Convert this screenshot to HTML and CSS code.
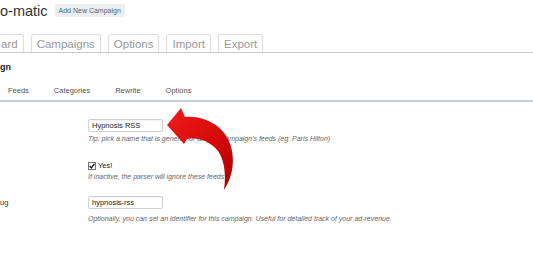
FILE: index.html
```html
<!DOCTYPE html>
<html lang="en">
<head>
    <meta charset="UTF-8">
    <title>WP-o-matic - Add New Campaign</title>
    <link rel="stylesheet" href="styles.css">
</head>
<body>

    <!-- Page title -->
    <div class="page-title">
        <h1>o-matic</h1>
        <a class="add-new" href="#">Add New Campaign</a>
    </div>

    <!-- Main tabs -->
    <nav class="main-tabs">
        <a class="tab cut" href="#">ard</a>
        <a class="tab" href="#">Campaigns</a>
        <a class="tab" href="#">Options</a>
        <a class="tab" href="#">Import</a>
        <a class="tab" href="#">Export</a>
    </nav>

    <h2 class="section-title">gn</h2>

    <!-- Campaign sub tabs -->
    <nav class="sub-tabs">
        <a href="#">Feeds</a>
        <a href="#">Categories</a>
        <a href="#">Rewrite</a>
        <a href="#">Options</a>
    </nav>

    <!-- Form -->
    <div class="form-rows">
        <div class="row">
            <label></label>
            <div class="field">
                <input class="text-input" type="text" value="Hypnosis RSS">
                <p class="note">Tip: pick a name that is general for all your campaign's feeds (eg: Paris Hilton)</p>
            </div>
        </div>

        <div class="row active-row">
            <label></label>
            <div class="field">
                <div class="check-line">
                    <span class="check">
                        <svg width="8" height="8" viewBox="0 0 9 9"><path d="M1.8 4.6 L3.7 6.6 L7.3 2" fill="none" stroke="#222" stroke-width="1.6"/></svg>
                    </span>
                    <span>Yes!</span>
                </div>
                <p class="note">If inactive, the parser will ignore these feeds</p>
            </div>
        </div>

        <div class="row slug-row">
            <label>ug</label>
            <div class="field">
                <input class="text-input" type="text" value="hypnosis-rss">
                <p class="note">Optionally, you can set an identifier for this campaign. Useful for detailed track of your ad-revenue.</p>
            </div>
        </div>
    </div>

    <!-- Red arrow pointing at the name field -->
    <svg class="arrow" width="533" height="261" viewBox="0 0 533 261">
        <defs>
            <linearGradient id="red" x1="0" y1="0" x2="1" y2="1">
                <stop offset="0" stop-color="#f01c1c"/>
                <stop offset="0.6" stop-color="#d40808"/>
                <stop offset="1" stop-color="#a80000"/>
            </linearGradient>
        </defs>
        <path d="M167,125 L181,108 L185,117 C205,115 228,127 232,151 C235,167 230,181 224,190 C226,176 225,161 218,151 C210,141 198,137 187,139 L184,144 Z" fill="url(#red)"/>
    </svg>

</body>
</html>
```

FILE: styles.css
```css
/* General */
body {
    margin: 0;
    background: #fff;
    font-family: "Liberation Sans", Arial, sans-serif;
    color: #333;
    position: relative;
    overflow: hidden;
}

a {
    text-decoration: none;
}

/* Title */
.page-title {
    display: flex;
    align-items: center;
    gap: 7px;
    height: 21px;
}

.page-title h1 {
    margin: 0;
    font-size: 14.5px;
    font-weight: normal;
    color: #333;
}

.add-new {
    font-size: 7px;
    color: #4f6b84;
    background: #eceef0;
    border-radius: 2px;
    padding: 0 4px;
    height: 13px;
    line-height: 13px;
}

/* Main tabs */
.main-tabs {
    display: flex;
    gap: 7px;
    margin-top: 13px;
    border-bottom: 1px solid #ccc;
    height: 18px;
}

.tab {
    font-size: 11.5px;
    color: #999;
    height: 18px;
    line-height: 18px;
    padding: 0 5px;
    border: 1px solid #ddd;
    border-bottom: none;
    border-radius: 3px 3px 0 0;
    box-sizing: border-box;
}

.tab.cut {
    border-left: none;
    border-radius: 0 3px 0 0;
    padding-left: 1px;
}

/* Section */
.section-title {
    margin: 9px 0 0;
    font-size: 9px;
    font-weight: bold;
    line-height: 10px;
    color: #222;
}

.sub-tabs {
    display: flex;
    gap: 25px;
    padding: 14px 0 0 8px;
    height: 14px;
    border-bottom: 2px solid #c3ccd6;
}

.sub-tabs a {
    font-size: 7.5px;
    color: #555;
    line-height: 10px;
}

/* Form rows */
.form-rows {
    padding-top: 17px;
}

.row {
    display: grid;
    grid-template-columns: 88px 1fr;
    margin-bottom: 18px;
}

.row label {
    font-size: 7.5px;
    color: #333;
    line-height: 13px;
}

.text-input {
    display: block;
    width: 75px;
    height: 13px;
    box-sizing: border-box;
    border: 1px solid #d0d0d0;
    border-radius: 2px;
    padding: 0 3px;
    font-family: "Liberation Sans", Arial, sans-serif;
    font-size: 7.5px;
    color: #222;
    box-shadow: inset 0 1px 1px rgba(0, 0, 0, 0.05);
}

.note {
    margin: 2px 0 0;
    font-size: 7px;
    font-style: italic;
    color: #666;
    line-height: 9px;
}

.active-row {
    margin-top: 2px;
    margin-bottom: 15px;
}

.active-row .note {
    margin-top: 2px;
}

.slug-row .note {
    margin-top: 5px;
}

.check-line {
    display: flex;
    align-items: center;
    gap: 2px;
    font-size: 7.5px;
    color: #222;
    height: 9px;
}

.check {
    display: flex;
    width: 8px;
    height: 8px;
    box-sizing: border-box;
    border: 1px solid #777;
    background: #fff;
    align-items: center;
    justify-content: center;
}

.check svg {
    flex: none;
}

/* Overlay arrow */
.arrow {
    position: absolute;
    top: 0;
    left: 0;
    pointer-events: none;
}
```
